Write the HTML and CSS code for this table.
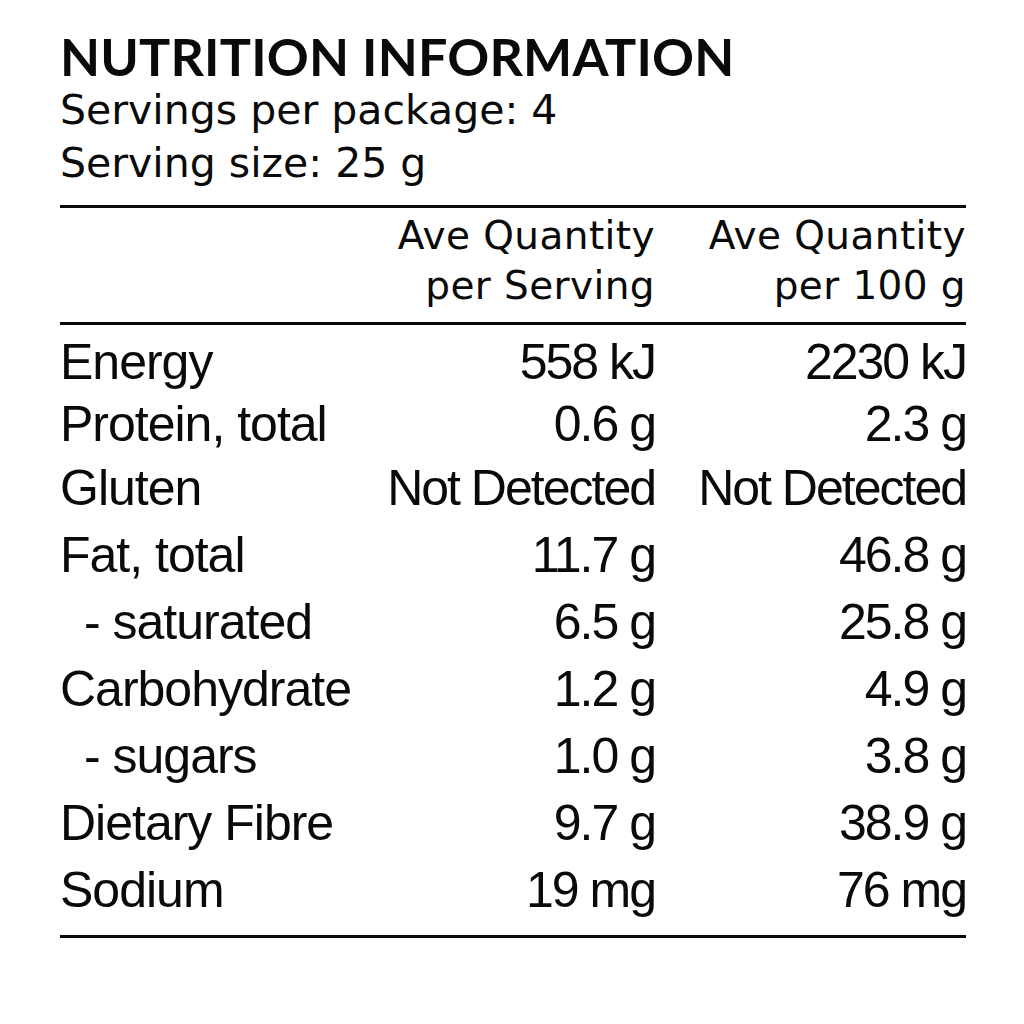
FILE: index.html
```html
<!DOCTYPE html>
<html lang="en">
<head>
<meta charset="utf-8">
<title>Nutrition Information</title>
<link rel="stylesheet" href="styles.css">
</head>
<body>
<div class="label">
  <h1 class="title">NUTRITION INFORMATION</h1>
  <p class="meta">Servings per package: 4</p>
  <p class="meta">Serving size: 25 g</p>
  <div class="rule"></div>
  <div class="grid head">
    <span></span>
    <span class="num">Ave Quantity<br>per Serving</span>
    <span class="num">Ave Quantity<br>per 100 g</span>
  </div>
  <div class="rule"></div>
  <div class="body">
    <div class="grid row tight"><span class="name">Energy</span><span class="num">558 kJ</span><span class="num">2230 kJ</span></div>
    <div class="grid row tight"><span class="name">Protein, total</span><span class="num">0.6 g</span><span class="num">2.3 g</span></div>
    <div class="grid row"><span class="name">Gluten</span><span class="num nd">Not Detected</span><span class="num nd">Not Detected</span></div>
    <div class="grid row"><span class="name">Fat, total</span><span class="num">11.7 g</span><span class="num">46.8 g</span></div>
    <div class="grid row"><span class="name sub">- saturated</span><span class="num">6.5 g</span><span class="num">25.8 g</span></div>
    <div class="grid row"><span class="name">Carbohydrate</span><span class="num">1.2 g</span><span class="num">4.9 g</span></div>
    <div class="grid row"><span class="name sub">- sugars</span><span class="num">1.0 g</span><span class="num">3.8 g</span></div>
    <div class="grid row"><span class="name">Dietary Fibre</span><span class="num">9.7 g</span><span class="num">38.9 g</span></div>
    <div class="grid row"><span class="name">Sodium</span><span class="num">19 mg</span><span class="num">76 mg</span></div>
  </div>
  <div class="rule"></div>
</div>
</body>
</html>
```

FILE: styles.css
```css
html, body {
  margin: 0;
  padding: 0;
  background: #ffffff;
}

body {
  color: #0a0a0a;
  font-family: "Liberation Sans", Arial, sans-serif;
}

.label {
  width: 906px;
  margin-left: 60px;
  padding-top: 29px;
}

.title {
  margin: 0;
  font-family: Lato, "Noto Sans", sans-serif;
  font-weight: 700;
  font-size: 52px;
  line-height: 55px;
  letter-spacing: 0.2px;
}

.meta {
  margin: 0;
  font-family: "DejaVu Sans", Inter, sans-serif;
  font-weight: 400;
  font-size: 41px;
  line-height: 53px;
}

.meta + .rule {
  margin-top: 15px;
}

.rule {
  height: 3px;
  background: #0a0a0a;
}

.grid {
  display: grid;
  grid-template-columns: 300px 295px 311px;
}

.head {
  font-family: "DejaVu Sans", Inter, sans-serif;
  font-size: 39px;
  line-height: 50px;
  letter-spacing: 0.4px;
  padding: 3px 0 11px;
}

.num {
  text-align: right;
}

.body {
  padding-top: 6px;
  padding-bottom: 11px;
}

.row {
  font-size: 50px;
  line-height: 67px;
  height: 67px;
  letter-spacing: -1px;
  white-space: nowrap;
}

.row.tight {
  height: 62px;
  line-height: 62px;
}

.row .num {
  letter-spacing: -2px;
}

.sub {
  padding-left: 24px;
}
```
